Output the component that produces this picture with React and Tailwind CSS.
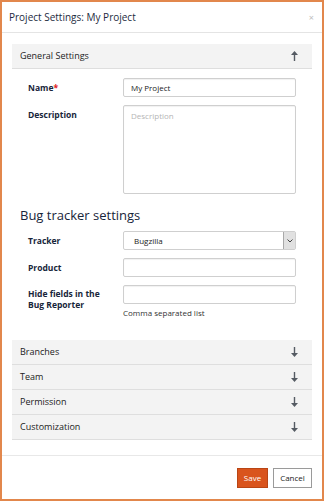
import React from 'react';

const ArrowIcon = ({ up }) => (
  <svg width="7" height="10" viewBox="0 0 7 10" className={up ? '' : 'rotate-180'}>
    <path d="M3.5 0 L7 4 L4.2 4 L4.2 10 L2.8 10 L2.8 4 L0 4 Z" fill="#555b63" />
  </svg>
);

const TextInput = ({ value, placeholder }) => (
  <div className="w-[173px] h-[19px] border border-[#cfcfcf] rounded-[2px] bg-white flex items-center px-[7px] text-[8px] text-[#222] shadow-[inset_0_1px_1px_rgba(0,0,0,0.06)]">
    {value ? value : <span className="text-[#b5b5b5]">{placeholder}</span>}
  </div>
);

const FieldRow = ({ label, required, children, className = '' }) => (
  <div className={`flex items-start ${className}`}>
    <div className="w-[111px] pl-4 text-[8.5px] font-bold text-[#17253a] leading-[19px]">
      {label}
      {required && <span className="text-[#e02020]">*</span>}
    </div>
    {children}
  </div>
);

const Section = ({ title }) => (
  <div className="h-[25px] bg-[#f3f3f3] border-b border-[#dedede] flex items-center justify-between pl-2 pr-[14px] text-[9px] text-[#222]">
    <span>{title}</span>
    <ArrowIcon />
  </div>
);

const App = () => {
  return (
    <div className="w-[324px] h-[501px] border-2 border-[#e2874c] bg-white flex flex-col font-['Open_Sans',sans-serif]">
      {/* Header */}
      <div className="h-[31px] border-b border-[#e4e4e4] flex items-center justify-between pl-[7px] pr-[8px]">
        <span className="text-[10px] text-[#1d2b3e]">Project Settings: My Project</span>
        <span className="text-[9px] text-[#bdbdbd] leading-none">×</span>
      </div>

      {/* Body */}
      <div className="flex-1 px-[10px] pt-[11px]">
        <div className="h-[25px] bg-[#f3f3f3] border-b border-[#dedede] flex items-center justify-between pl-2 pr-[14px] text-[9px] text-[#222]">
          <span>General Settings</span>
          <ArrowIcon up />
        </div>

        <FieldRow label="Name" required className="mt-[9px]">
          <TextInput value="My Project" />
        </FieldRow>
        <FieldRow label="Description" className="mt-[8px]">
          <div className="w-[173px] h-[89px] border border-[#cfcfcf] rounded-[2px] px-[7px] pt-[4px] text-[8px] text-[#b5b5b5] shadow-[inset_0_1px_1px_rgba(0,0,0,0.06)]">
            Description
          </div>
        </FieldRow>

        <div className="mt-[12px] pl-2 text-[13px] leading-[18px] text-[#17253a]">Bug tracker settings</div>

        <FieldRow label="Tracker" className="mt-[7px]">
          <div className="w-[173px] h-[19px] border border-[#cfcfcf] rounded-[2px] flex items-stretch bg-white">
            <div className="flex-1 flex items-center pl-[10px] text-[8px] text-[#222]">Bugzilla</div>
            <div className="w-[12px] bg-[#e1e1e1] border-l border-[#a9a9a9] flex items-center justify-center">
              <svg width="6" height="4" viewBox="0 0 6 4">
                <path d="M0.5 0.5 L3 3 L5.5 0.5" fill="none" stroke="#444" strokeWidth="1" />
              </svg>
            </div>
          </div>
        </FieldRow>
        <FieldRow label="Product" className="mt-[8px]">
          <TextInput />
        </FieldRow>
        <div className="mt-[8px] flex items-start">
          <div className="w-[111px] pl-4 pt-[3px] text-[8.5px] font-bold text-[#17253a] leading-[11px]">
            Hide fields in the
            <br />
            Bug Reporter
          </div>
          <div>
            <TextInput />
            <div className="mt-[3px] text-[8px] leading-[12px] text-[#333]">Comma separated list</div>
          </div>
        </div>

        <div className="mt-[21px]">
          <Section title="Branches" />
          <Section title="Team" />
          <Section title="Permission" />
          <Section title="Customization" />
        </div>
      </div>

      {/* Footer */}
      <div className="h-[44px] border-t border-[#e8e8e8] flex items-center justify-end gap-[5px] pr-[10px]">
        <button className="w-[31px] h-[20px] bg-[#d9541d] border border-[#b94514] text-white text-[8px]">Save</button>
        <button className="w-[39px] h-[20px] bg-white border border-[#9a9a9a] text-[#222] text-[8px]">Cancel</button>
      </div>
    </div>
  );
};

export default App;
